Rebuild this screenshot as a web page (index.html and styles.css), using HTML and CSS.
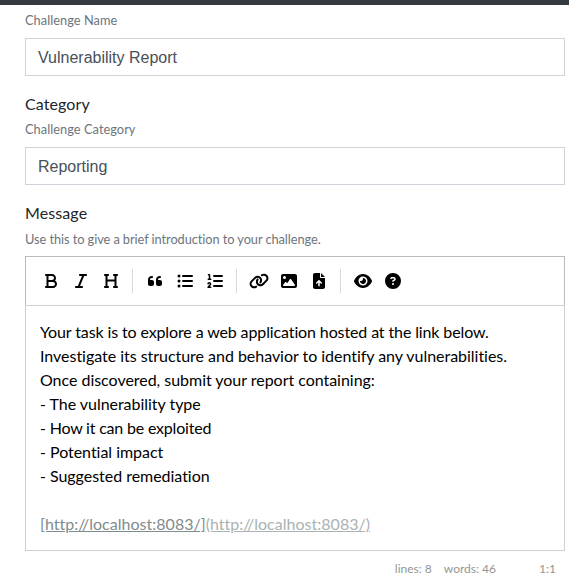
FILE: index.html
```html
<!DOCTYPE html>
<html lang="en">
<head>
<meta charset="utf-8">
<title>Challenge</title>
<link rel="stylesheet" href="styles.css">
</head>
<body>
<div class="navbar"></div>
<form class="form">
  <div class="group">
    <small class="help">Challenge Name</small>
    <div class="control">Vulnerability Report</div>
  </div>
  <div class="group">
    <div class="label">Category</div>
    <small class="help">Challenge Category</small>
    <div class="control">Reporting</div>
  </div>
  <div class="group">
    <div class="label">Message</div>
    <small class="help intro">Use this to give a brief introduction to your challenge.</small>
    <div class="toolbar">
      <span class="tool"><svg viewBox="0 0 384 512"><path d="M0 64C0 46.3 14.3 32 32 32H80 96 224c70.7 0 128 57.3 128 128c0 31.3-11.3 60.1-30 82.3c37.1 22.4 62 63.1 62 109.7c0 70.7-57.3 128-128 128H96 80 32c-17.7 0-32-14.3-32-32s14.3-32 32-32H48V256 96H32C14.3 96 0 81.7 0 64zM224 224c35.3 0 64-28.7 64-64s-28.7-64-64-64H112V224H224zM112 288V416H256c35.3 0 64-28.7 64-64s-28.7-64-64-64H224 112z"/></svg></span>
      <span class="tool"><svg viewBox="0 0 384 512"><path d="M128 64c0-17.7 14.3-32 32-32H352c17.7 0 32 14.3 32 32s-14.3 32-32 32H293.3L160 416h64c17.7 0 32 14.3 32 32s-14.3 32-32 32H32c-17.7 0-32-14.3-32-32s14.3-32 32-32H90.7L224 96H160c-17.7 0-32-14.3-32-32z"/></svg></span>
      <span class="tool"><svg viewBox="0 0 448 512"><path d="M0 64C0 46.3 14.3 32 32 32H80h48c17.7 0 32 14.3 32 32s-14.3 32-32 32H112V208H336V96H320c-17.7 0-32-14.3-32-32s14.3-32 32-32h48 48c17.7 0 32 14.3 32 32s-14.3 32-32 32H400V240 416h16c17.7 0 32 14.3 32 32s-14.3 32-32 32H368 320c-17.7 0-32-14.3-32-32s14.3-32 32-32h16V272H112V416h16c17.7 0 32 14.3 32 32s-14.3 32-32 32H80 32c-17.7 0-32-14.3-32-32s14.3-32 32-32H48V240 96H32C14.3 96 0 81.7 0 64z"/></svg></span>
      <i class="separator"></i>
      <span class="tool"><svg viewBox="0 0 448 512"><path d="M0 216C0 149.7 53.7 96 120 96h8c17.7 0 32 14.3 32 32s-14.3 32-32 32h-8c-30.9 0-56 25.1-56 56v8h64c35.3 0 64 28.7 64 64v64c0 35.3-28.7 64-64 64H64c-35.3 0-64-28.7-64-64V216zm256 0c0-66.3 53.7-120 120-120h8c17.7 0 32 14.3 32 32s-14.3 32-32 32h-8c-30.9 0-56 25.1-56 56v8h64c35.3 0 64 28.7 64 64v64c0 35.3-28.7 64-64 64H320c-35.3 0-64-28.7-64-64V216z"/></svg></span>
      <span class="tool"><svg viewBox="0 0 512 512"><circle cx="64" cy="96" r="48"/><circle cx="64" cy="256" r="48"/><circle cx="64" cy="416" r="48"/><rect x="160" y="64" width="352" height="64" rx="32"/><rect x="160" y="224" width="352" height="64" rx="32"/><rect x="160" y="384" width="352" height="64" rx="32"/></svg></span>
      <span class="tool"><svg viewBox="0 0 512 512"><path d="M24 56c0-13.3 10.7-24 24-24H80c13.3 0 24 10.7 24 24V176h16c13.3 0 24 10.7 24 24s-10.7 24-24 24H40c-13.3 0-24-10.7-24-24s10.7-24 24-24H56V80H48C34.7 80 24 69.3 24 56zM86.7 341.2c-6.5-7.4-18.3-6.9-24 1.2L51.5 357.9c-7.7 10.8-22.7 13.3-33.5 5.6s-13.3-22.7-5.6-33.5l11.1-15.6c23.7-33.2 72.3-35.6 99.2-4.9c21.3 24.4 20.8 60.9-1.1 84.7L86.8 432H120c13.3 0 24 10.7 24 24s-10.7 24-24 24H32c-9.5 0-18.2-5.6-22-14.4s-2.1-18.9 4.3-25.9l72-78c5.3-5.8 5.4-14.6 .3-20.5z"/><rect x="192" y="64" width="320" height="64" rx="32"/><rect x="192" y="224" width="320" height="64" rx="32"/><rect x="192" y="384" width="320" height="64" rx="32"/></svg></span>
      <i class="separator"></i>
      <span class="tool"><svg viewBox="0 0 640 512"><path d="M579.8 267.7c56.5-56.5 56.5-148 0-204.5c-50-50-128.8-56.5-186.3-15.4l-1.6 1.1c-14.4 10.3-17.7 30.3-7.4 44.6s30.3 17.7 44.6 7.4l1.6-1.1c32.1-22.9 76-19.3 103.8 8.6c31.5 31.5 31.5 82.5 0 114L422.3 334.8c-31.5 31.5-82.5 31.5-114 0c-27.9-27.9-31.5-71.8-8.6-103.8l1.1-1.6c10.3-14.4 6.9-34.4-7.4-44.6s-34.4-6.9-44.6 7.4l-1.1 1.6C206.5 251.2 213 330 263 380c56.5 56.5 148 56.5 204.5 0L579.8 267.7zM60.2 244.3c-56.5 56.5-56.5 148 0 204.5c50 50 128.8 56.5 186.3 15.4l1.6-1.1c14.4-10.3 17.7-30.3 7.4-44.6s-30.3-17.7-44.6-7.4l-1.6 1.1c-32.1 22.9-76 19.3-103.8-8.6C74 372 74 321 105.5 289.5L217.7 177.2c31.5-31.5 82.5-31.5 114 0c27.9 27.9 31.5 71.8 8.6 103.9l-1.1 1.6c-10.3 14.4-6.9 34.4 7.4 44.6s34.4 6.9 44.6-7.4l1.1-1.6C433.5 260.8 427 182 377 132c-56.5-56.5-148-56.5-204.5 0L60.2 244.3z"/></svg></span>
      <span class="tool"><svg viewBox="0 0 512 512"><path fill-rule="evenodd" d="M0 96C0 60.7 28.7 32 64 32H448c35.3 0 64 28.7 64 64V416c0 35.3-28.7 64-64 64H64c-35.3 0-64-28.7-64-64V96zM323.8 202.5c-4.5-6.6-11.9-10.5-19.8-10.5s-15.4 3.9-19.8 10.5l-87 127.6L170.7 297c-4.6-5.7-11.5-9-18.7-9s-14.2 3.3-18.7 9l-64 80c-5.8 7.2-6.9 17.1-2.9 25.4s12.4 13.6 21.6 13.6H424c8.9 0 17.1-4.9 21.2-12.8s3.6-17.4-1.4-24.7l-120-176zM112 192a48 48 0 1 0 0-96 48 48 0 1 0 0 96z"/></svg></span>
      <span class="tool"><svg viewBox="0 0 384 512"><path fill-rule="evenodd" d="M64 0C28.7 0 0 28.7 0 64V448c0 35.3 28.7 64 64 64H320c35.3 0 64-28.7 64-64V160H256c-17.7 0-32-14.3-32-32V0H64zM256 0V128H384L256 0zM216 408c0 13.3-10.7 24-24 24s-24-10.7-24-24V305.900l-31 31c-9.400 9.400-24.600 9.400-33.900 0s-9.400-24.600 0-33.900l72-72c9.400-9.400 24.600-9.400 33.900 0l72 72c9.400 9.400 9.400 24.600 0 33.900s-24.600 9.400-33.900 0l-31-31V408z"/></svg></span>
      <i class="separator"></i>
      <span class="tool"><svg viewBox="0 0 576 512"><path fill-rule="evenodd" d="M288 32c-80.800 0-145.500 36.800-192.600 80.600C48.600 156 17.300 208 2.500 243.700c-3.300 7.900-3.300 16.700 0 24.600C17.300 304 48.600 356 95.400 399.400C142.500 443.200 207.200 480 288 480s145.500-36.800 192.600-80.600c46.800-43.500 78.100-95.400 93-131.100c3.300-7.900 3.300-16.700 0-24.600c-14.900-35.700-46.200-87.700-93-131.100C433.500 68.800 368.800 32 288 32zM144 256a144 144 0 1 1 288 0 144 144 0 1 1-288 0zm144-64c0 35.300-28.700 64-64 64c-7.100 0-13.900-1.200-20.300-3.300c-5.500-1.800-11.900 1.600-11.700 7.400c.3 6.900 1.300 13.800 3.200 20.700c13.700 51.200 66.400 81.600 117.600 67.900s81.600-66.400 67.900-117.600c-11.100-41.500-47.800-69.400-88.600-71.100c-5.800-.2-9.200 6.100-7.400 11.700c2.100 6.400 3.300 13.200 3.300 20.300z"/></svg></span>
      <span class="tool"><svg viewBox="0 0 512 512"><path fill-rule="evenodd" d="M256 512A256 256 0 1 0 256 0a256 256 0 1 0 0 512zM169.800 165.300c7.900-22.300 29.100-37.300 52.800-37.300h58.300c34.900 0 63.100 28.300 63.100 63.100c0 22.600-12.100 43.500-31.700 54.800L280 264.400c-.2 13-10.900 23.600-24 23.600c-13.300 0-24-10.700-24-24V250.500c0-8.600 4.600-16.500 12.100-20.800l44.300-25.400c4.700-2.700 7.600-7.700 7.600-13.100c0-8.400-6.800-15.100-15.100-15.100H222.600c-3.400 0-6.400 2.100-7.500 5.300l-.4 1.200c-4.400 12.500-18.200 19-30.600 14.600s-19-18.200-14.600-30.600l.3-1.300zM224 352a32 32 0 1 1 64 0 32 32 0 1 1-64 0z"/></svg></span>
    </div>
    <div class="editor">
      <div class="tight">Your task is to explore a web application hosted at the link below.</div>
      <div>Investigate its structure and behavior to identify any vulnerabilities.</div>
      <div>Once discovered, submit your report containing:</div>
      <div>- The vulnerability type</div>
      <div class="tighter">- How it can be exploited</div>
      <div>- Potential impact</div>
      <div>- Suggested remediation</div>
      <div><br></div>
      <div class="address"><span class="link">[http://localhost:8083/]</span><span class="url">(http://localhost:8083/)</span></div>
    </div>
    <div class="status"><span>lines: 8</span><span>words: 46</span><span class="cursor">1:1</span></div>
  </div>
</form>
</body>
</html>
```
FILE: styles.css
```css
* { box-sizing: border-box; }
body {
  margin: 0;
  overflow: hidden;
  background: #fff;
  color: #212529;
  font: 16px/24px Lato, sans-serif;
  font-variant-ligatures: none;
}
.navbar { height: 5px; background: #343a40; }
.form { padding: 5px 4px 0 25px; }
.group { margin-bottom: 16px; }
.label { height: 24px; margin-bottom: 3px; letter-spacing: 0.1px; }
.help {
  display: block;
  height: 20px;
  margin-bottom: 8px;
  color: #6c757d;
  font-size: 12.8px;
  line-height: 20px;
  letter-spacing: 0.04px;
}
.intro { line-height: 22px; letter-spacing: -0.07px; }
.control {
  height: 38px;
  padding: 7px 12px 5px;
  border: 1px solid #ced4da;
  color: #495057;
  font-family: "Liberation Sans", sans-serif;
}
.toolbar {
  display: flex;
  align-items: center;
  height: 49px;
  padding: 0 10px;
  border: 1px solid #bbb;
  border-bottom: 0;
}
.tool {
  display: flex;
  justify-content: center;
  align-items: center;
  width: 30px;
  height: 30px;
}
.tool svg { height: 16px; fill: #000; }
.separator {
  width: 1px;
  height: 24px;
  margin: 0 7px 0 6px;
  background: #d9d9d9;
}
.editor {
  height: 246px;
  padding: 14px;
  border: 1px solid #d0d0d0;
  color: #000;
  letter-spacing: -0.03px;
}
.tight { letter-spacing: -0.12px; }
.tighter { letter-spacing: -0.2px; }
.address { letter-spacing: 0.02px; }
.link { color: #7f8c8d; text-decoration: underline; }
.url { color: #aab2b3; text-decoration: underline; }
.status {
  display: flex;
  justify-content: flex-end;
  padding: 8px 9px;
  color: #959694;
  font-size: 12px;
  line-height: 20px;
}
.status span { margin-left: 12px; }
.status .cursor { min-width: 48px; text-align: right; }
```
